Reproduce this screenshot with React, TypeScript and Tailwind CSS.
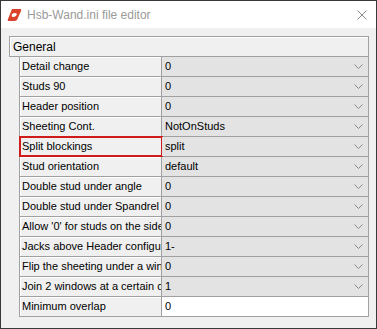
const rows: { label: string; value: string; kind?: 'text' }[] = [
  { label: 'Detail change', value: '0' },
  { label: 'Studs 90', value: '0' },
  { label: 'Header position', value: '0' },
  { label: 'Sheeting Cont.', value: 'NotOnStuds' },
  { label: 'Split blockings', value: 'split' },
  { label: 'Stud orientation', value: 'default' },
  { label: 'Double stud under angle', value: '0' },
  { label: 'Double stud under Spandrel', value: '0' },
  { label: "Allow '0' for studs on the sides:", value: '0' },
  { label: 'Jacks above Header configuration', value: '1-' },
  { label: 'Flip the sheeting under a window', value: '0' },
  { label: 'Join 2 windows at a certain distance', value: '1' },
  { label: 'Minimum overlap', value: '0', kind: 'text' },
];

function Chevron() {
  return (
    <svg width="9" height="6" viewBox="0 0 9 6" className="shrink-0">
      <path d="M0.5 0.5 L4.5 4.5 L8.5 0.5" fill="none" stroke="#8a8a8a" strokeWidth="1" />
    </svg>
  );
}

function Logo() {
  return (
    <svg width="15" height="14" viewBox="0 0 15 14">
      <path d="M5 1 L13 1 Q15 1 14 3 L10 12 Q9 13 7 13 L2 13 Q0 13 1 11 Z" fill="#d9422b" />
      <path d="M5 6 Q8 4 10 6 Q9 9 6 9 Q4 9 5 6 Z" fill="#ffffff" />
    </svg>
  );
}

export default function App() {
  return (
    <div
      className="w-[377px] h-[329px] border border-[#3a3a3a] flex flex-col bg-[#f0f0f0]"
      style={{ fontFamily: '"Liberation Sans", Arial, sans-serif' }}
    >
      <div className="h-[27px] bg-white flex items-center pl-[6px] pr-[9px]">
        <Logo />
        <span className="ml-[5px] text-[12px] text-[#9a9a9a]">Hsb-Wand.ini file editor</span>
        <svg width="10" height="10" viewBox="0 0 10 10" className="ml-auto">
          <path d="M0.5 0.5 L9.5 9.5 M9.5 0.5 L0.5 9.5" stroke="#8c8c8c" strokeWidth="1" />
        </svg>
      </div>

      <div className="flex-1 pt-[8px] pl-[8px] pr-[7px]">
        <div className="h-[21px] border border-[#a0a0a0] shadow-[inset_1px_1px_0_#ffffff] flex items-center pl-[3px] text-[12px] text-black">
          General
        </div>
        <div className="ml-[10px] border-l border-[#a0a0a0]">
          {rows.map((row) => (
            <div key={row.label} className="h-[20px] flex border-b border-[#a0a0a0] text-[11px] text-black">
              <div
                className={`w-[142px] shrink-0 border-r border-[#a0a0a0] bg-[#f0f0f0] shadow-[inset_1px_1px_0_#ffffff] flex items-center pl-[2px] overflow-hidden whitespace-nowrap ${
                  row.label === 'Split blockings' ? 'outline-2 outline-[#d01b1b] -outline-offset-1' : ''
                }`}
              >
                {row.label}
              </div>
              <div
                className={`flex-1 flex items-center pl-[3px] pr-[5px] border-r border-[#a0a0a0] ${
                  row.kind === 'text' ? 'bg-white' : 'bg-[#e3e3e3]'
                }`}
              >
                <span className="flex-1">{row.value}</span>
                {row.kind !== 'text' && <Chevron />}
              </div>
            </div>
          ))}
        </div>
      </div>
    </div>
  );
}
